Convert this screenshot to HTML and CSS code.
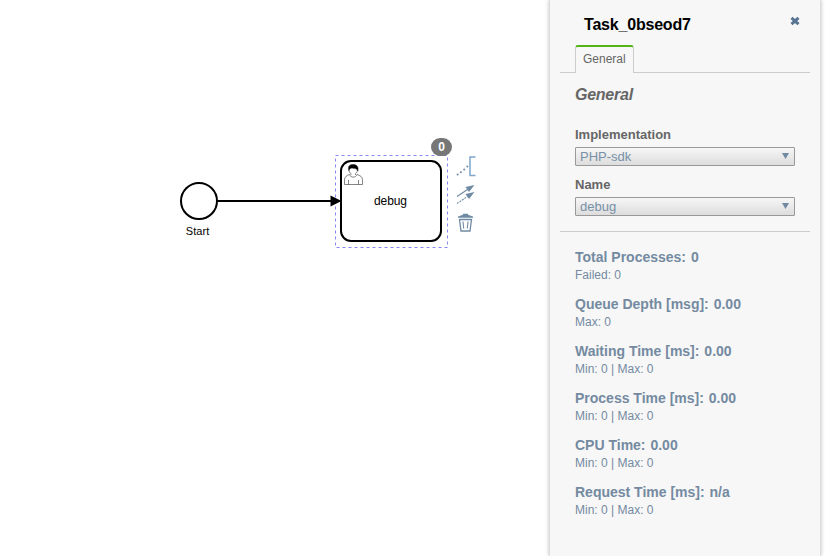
FILE: index.html
```html
<!DOCTYPE html>
<html lang="en">
<head>
<meta charset="utf-8">
<title>Process editor</title>
<link rel="stylesheet" href="styles.css">
</head>
<body>
<main class="editor">
  <section class="canvas">
    <svg class="diagram" width="549" height="556" viewBox="0 0 549 556">
      <circle class="shape" cx="199" cy="201" r="18"/>
      <text class="caption" x="197.500" y="235" textLength="23.500">Start</text>
      <rect class="outline" x="335.500" y="155.500" width="112" height="92"/>
      <rect class="shape" x="341" y="161" width="100" height="80" rx="10"/>
      <path class="flow" d="M217 201H333"/>
      <path d="M330.500 195.500L341.500 201L330.500 206.500Z"/>
      <g class="user">
        <path d="M349.500 174.500C346.500 175.500 344.500 177 344.500 180V184.500H362.500V180C362.500 177 360.500 175.500 357 174.500C356 178 350.500 178 349.500 174.500M348.500 180V184.500M358.500 180V184.500"/>
        <path d="M349 169.500C349 172 350.300 173.200 351 173.700V175M357.500 169.500C357.500 172 356.200 173.200 355.500 173.700V175"/>
        <path class="hair" d="M348.800 170.500C347.500 166 350 164.600 353 164.600C356.500 164.600 359 166.500 357.800 171C356.800 167.800 354.500 169 353.200 168.300C351.500 167.500 349.700 168.500 348.800 170.500Z"/>
      </g>
      <text class="task-name" x="390.500" y="205" textLength="33">debug</text>
      <rect class="badge" x="431" y="138" width="21" height="18" rx="9"/>
      <text class="badge-count" x="441.500" y="151">0</text>
      <g class="tools">
        <path class="bracket" d="M475.500 157H470V175.500H475.500"/>
        <g class="dots">
          <circle cx="457.600" cy="174.600" r="1"/>
          <circle cx="460.900" cy="172.200" r="1"/>
          <circle cx="464.200" cy="169.600" r="1"/>
          <circle cx="467.400" cy="166.500" r="1"/>
        </g>
        <path d="M457 196.500L469 188.500"/>
        <path class="dash" d="M457 203.500L469 195.500"/>
        <path class="solid" d="M474.500 185L465.500 187L469 192ZM474.500 192L465.500 194L469 199Z"/>
        <path class="bin" d="M459.500 219.500H471.500L470 231H461Z"/>
        <path class="solid" d="M458 217.800V216.500L463 214.800V213.700H468V214.800L473 216.500V217.800Z"/>
        <path d="M463 221.500L463.700 228.500M468 221.500L467.300 228.500"/>
      </g>
    </svg>
  </section>
  <aside class="panel">
    <div class="panel-body">
      <header class="header">
        <h1>Task_0bseod7</h1>
        <svg class="close" width="10" height="10" viewBox="0 0 10 10"><path d="M1.500 1.800L8.500 8.200M8.500 1.800L1.500 8.200"/></svg>
      </header>
      <nav class="tabs"><span class="tab">General</span></nav>
      <section class="general">
        <h2>General</h2>
        <div class="label">Implementation</div>
        <div class="select"><span>PHP-sdk</span><i class="arrow"></i></div>
        <div class="label">Name</div>
        <div class="select"><span>debug</span><i class="arrow"></i></div>
      </section>
      <section class="stats">
        <div class="stat"><h3>Total Processes: <span>0</span></h3><p>Failed: 0</p></div>
        <div class="stat"><h3>Queue Depth [msg]: <span>0.00</span></h3><p>Max: 0</p></div>
        <div class="stat"><h3>Waiting Time [ms]: <span>0.00</span></h3><p>Min: 0 | Max: 0</p></div>
        <div class="stat"><h3>Process Time [ms]: <span>0.00</span></h3><p>Min: 0 | Max: 0</p></div>
        <div class="stat"><h3>CPU Time: <span>0.00</span></h3><p>Min: 0 | Max: 0</p></div>
        <div class="stat"><h3>Request Time [ms]: <span>n/a</span></h3><p>Min: 0 | Max: 0</p></div>
      </section>
    </div>
  </aside>
</main>
</body>
</html>
```

FILE: styles.css
```css
* { box-sizing: border-box; }
body { margin: 0; overflow: hidden; background: #fff; font-family: "Liberation Sans", Arial, sans-serif; }
h1, h2, h3, p { margin: 0; }
.editor { display: flex; height: 556px; }
.canvas { width: 549px; }
.diagram { display: block; }
.shape { fill: #fff; stroke: #000; stroke-width: 2; }
.flow { stroke: #000; stroke-width: 2; }
.outline { fill: none; stroke: #8888f0; stroke-dasharray: 3 3; }
text { text-anchor: middle; }
.caption { font-size: 11px; }
.task-name { font-size: 12px; }
.badge { fill: #777; }
.badge-count { fill: #fff; font-size: 12px; font-weight: bold; }
.user { fill: none; stroke: #333; stroke-width: .6; }
.user .hair { fill: #000; }
.tools { fill: none; stroke: #708aa3; stroke-width: 1.1; }
.tools .solid { fill: #708aa3; stroke: none; }
.tools .dash { stroke-dasharray: 2 1; }
.tools .dots { fill: #708aa3; stroke: none; }
.tools .bracket { stroke: #7fa6cb; stroke-width: 1.500; }
.tools .bin { stroke-width: 1.300; }

.panel { width: 272px; padding: 0 10px; background: #f7f7f7; border-left: 1px solid #ddd; border-right: 1px solid #ddd; box-shadow: 0 0 4px rgba(0, 0, 0, .25); }
.header { display: flex; justify-content: space-between; height: 45px; padding: 15px 10px 0 24px; }
h1 { font-size: 16px; line-height: 19px; letter-spacing: -.2px; color: #000; }
.close { margin-top: 1px; }
.close path { stroke: #587493; stroke-width: 3; }
.tabs { display: flex; height: 28px; padding-left: 15px; border-bottom: 1px solid #ccc; }
.tab { height: 28px; padding: 5px 7px 0; border: 1px solid #ccc; border-top: 2px solid #52b415; border-bottom: 0; border-radius: 3px 3px 0 0; background: #f7f7f7; color: #666; font-size: 12px; line-height: 14px; }
.general { height: 159px; padding: 12px 15px 0; border-bottom: 1px solid #ccc; }
h2 { height: 42px; color: #666; font-size: 16px; line-height: 19px; letter-spacing: -.25px; font-style: italic; }
.label { height: 20px; color: #666; font-size: 13px; font-weight: bold; line-height: 15px; }
.select { display: flex; justify-content: space-between; width: 220px; height: 19px; margin-bottom: 11px; padding: 1px 4px; border: 1px solid #999; border-radius: 1px; background: linear-gradient(#f6f6f6, #ddd); color: #7890a7; font-size: 13px; line-height: 15px; }
.arrow { width: 7px; height: 6px; margin: 4px 1px 0 0; background: #708aa3; clip-path: polygon(0 0, 100% 0, 50% 100%); }
.stats { padding: 17px 15px 0; color: #748aa1; }
.stat { height: 47px; }
h3 { font-size: 14px; line-height: 17px; }
h3 span { margin-left: 1px; }
.stat p { margin-top: 2px; font-size: 12px; line-height: 14px; }
```
